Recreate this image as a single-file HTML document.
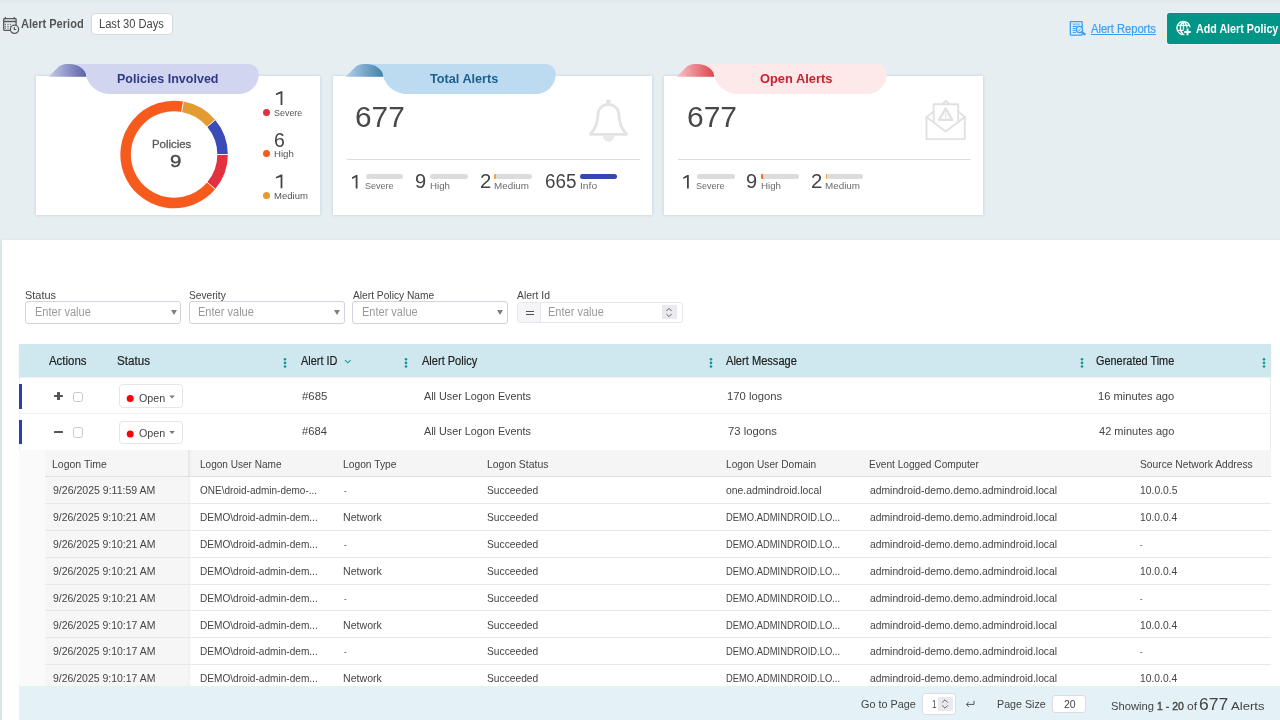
<!DOCTYPE html>
<html>
<head>
<meta charset="utf-8">
<title>Alerts</title>
<style>
*{box-sizing:border-box;margin:0;padding:0}
html,body{width:1280px;height:720px;overflow:hidden}
body{background:#e6eef2;font-family:"Liberation Sans",sans-serif;color:#444;position:relative}
#tx{position:absolute;left:0;top:0;width:1280px;height:720px;will-change:transform}
.a{position:absolute}
.t{position:absolute;white-space:nowrap;line-height:1;transform-origin:0 0}
.card{position:absolute;top:76px;height:139px;background:#fff;box-shadow:0 0 3px rgba(110,135,150,.3)}
.hr{position:absolute;height:1px;background:#dcdcdc}
.bar{position:absolute;top:173.6px;height:5px;border-radius:2.5px;background:#dcdcdc}
.bar i{position:absolute;left:0;top:0;height:5px;width:1.5px;border-radius:1px 0 0 1px}
.dot{position:absolute;width:7px;height:7px;border-radius:50%}
.finp{position:absolute;top:301px;height:22.5px;background:#fff;border:1px solid #d3d3df;border-radius:3px}
.car{position:absolute;top:7.8px;width:0;height:0;border-left:3px solid transparent;border-right:3px solid transparent;border-top:5px solid #808080}
.dots{position:absolute;width:3px;height:10px;top:358px}
.dots i{position:absolute;left:0;width:2.6px;height:2.6px;border-radius:50%;background:#0a9d8b}
.row{position:absolute;left:19px;width:1252px;background:#fff;border-left:1px solid #eee;border-right:1px solid #ebebeb}
.lbar{position:absolute;left:18.7px;width:3.3px;height:24.5px;background:#2d3eae}
.chk{position:absolute;left:73px;width:10.3px;height:10.3px;border:1px solid #c9c9c9;border-radius:2.5px;background:#fff}
.badge{position:absolute;left:119px;width:64px;height:23.2px;border:1px solid #e6e6e6;border-radius:3.5px;background:#fff}
.badge b{display:none}
.badge em{display:none;position:absolute;left:49.3px;top:10.2px;width:0;height:0;border-left:2.9px solid transparent;border-right:2.9px solid transparent;border-top:3.1px solid #7a7a7a}
.nr{position:absolute;left:0;width:1227px;height:1px;background:#e8e8e8}
.fbox{position:absolute;background:#fff;border:1px solid #d9dde1;border-radius:3px}

</style>
</head>
<body>
<div class="a" style="left:0;top:0;width:1280px;height:4px;background:linear-gradient(#dde5e9,#e6eef2)"></div>
<svg class="a" style="left:0;top:14px" width="22" height="22" viewBox="0 0 22 22" fill="none" stroke="#585858" stroke-width="1.3">
<rect x="3.7" y="4.7" width="12.4" height="11.6" rx=".7"/>
<path d="M3.7 7.5H16.1M5.4 3.1V5.3M14.2 3.1V5.3"/>
<path d="M4.8 10.4h1.2M7.4 10.4h1.2M9.9 10.4h1.2M4.8 12.3h1.2M7.4 12.3h1.2M9.9 12.3h.8M4.8 14.2h1.2M7.4 14.2h1.2" stroke-width="1.2" stroke="#777"/>
<circle cx="14.5" cy="15.3" r="4.1" fill="#e6eef2"/>
<path d="M14.3 13V15.5H16.2" stroke-width="1.2"/>
</svg>
<div class="a" style="left:91.3px;top:12.5px;width:81.4px;height:22.2px;background:#fff;border:1px solid #d6dadd;border-radius:4px"></div>
<svg class="a" style="left:1062px;top:12px" width="36" height="30" viewBox="0 0 36 30" fill="none" stroke="#3a9df2" stroke-width="1.3">
<rect x="8.35" y="9.65" width="11.8" height="13.45" rx=".5"/>
<rect x="10.6" y="11.3" width="7.2" height="2" fill="#8cc6f8" stroke="none"/>
<path d="M10.6 14.5h4M10.6 16.5h3.2M10.6 18.4h3.2M10.6 20.4h3.4" stroke-width="1"/>
<circle cx="17.5" cy="17.5" r="3.1" fill="#e6eef2" stroke-width="1.2"/>
<path d="M16.3 17.6l.9.9l1.5-1.9" stroke-width="1"/>
<path d="M19.8 19.9L23.3 22.9" stroke-width="2.1"/>
</svg>
<div class="a" style="left:1166.8px;top:13px;width:120px;height:30.6px;background:#009586;border-radius:2.5px;box-shadow:0 0 1.5px rgba(255,255,255,.9)"></div>
<svg class="a" style="left:1166px;top:10px" width="36" height="36" viewBox="0 0 36 36" fill="none" stroke="#fff" stroke-width="1.35">
<path d="M24.05 17.4A6.6 6.6 0 1 0 18.4 24.5"/>
<path d="M17.5 11.4C13.4 14.6 13.4 21.4 17.3 24.6M17.5 11.4C20 13.2 20.9 15.6 20.8 17.6M17.5 11.4V19.6M11.6 15.3H23.4M11.6 20.4H17.6"/>
<path d="M21.5 18.6V25.2M18.2 21.9H24.8" stroke-width="2"/>
</svg>
<div class="card" style="left:36px;width:284px"></div>
<div class="card" style="left:333px;width:319px"></div>
<div class="card" style="left:664px;width:319px"></div>
<svg class="a" style="left:36px;top:64px" width="240" height="31" viewBox="0 0 240 31">
<defs><linearGradient id="g1" x1="0" y1="0" x2="1" y2="0"><stop offset="0" stop-color="#c5c9e8"/><stop offset="1" stop-color="#5a64a8"/></linearGradient></defs>
<path d="M33 0H212.8A10 10 0 0 1 222.8 10A20 20 0 0 1 202.8 30H74A25 25 0 0 1 50.2 12.75H33Z" fill="#d1d5ef"/>
<path d="M12.6 12.75L21.6 3.7Q25.4 0 31 0H33A17.2 12.75 0 0 1 50.2 12.75Z" fill="url(#g1)"/>
</svg>
<svg class="a" style="left:333px;top:64px" width="240" height="31" viewBox="0 0 240 31">
<defs><linearGradient id="g2" x1="0" y1="0" x2="1" y2="0"><stop offset="0" stop-color="#b0d0e8"/><stop offset="1" stop-color="#4580ab"/></linearGradient></defs>
<path d="M33 0H212.8A10 10 0 0 1 222.8 10A20 20 0 0 1 202.8 30H74A25 25 0 0 1 50.2 12.75H33Z" fill="#bcdbf0"/>
<path d="M12.6 12.75L21.6 3.7Q25.4 0 31 0H33A17.2 12.75 0 0 1 50.2 12.75Z" fill="url(#g2)"/>
</svg>
<svg class="a" style="left:664px;top:64px" width="240" height="31" viewBox="0 0 240 31">
<defs><linearGradient id="g3" x1="0" y1="0" x2="1" y2="0"><stop offset="0" stop-color="#f9c3c8"/><stop offset="1" stop-color="#dc4552"/></linearGradient></defs>
<path d="M33 0H212.8A10 10 0 0 1 222.8 10A20 20 0 0 1 202.8 30H74A25 25 0 0 1 50.2 12.75H33Z" fill="#fde8ea"/>
<path d="M12.6 12.75L21.6 3.7Q25.4 0 31 0H33A17.2 12.75 0 0 1 50.2 12.75Z" fill="url(#g3)"/>
</svg>
<svg class="a" style="left:0;top:0" width="330" height="220" viewBox="0 0 330 220" fill="none" stroke-width="10.5"><path d="M222.60 154.50A48.5 48.5 0 0 1 211.25 185.68" stroke="#e5303f"/><path d="M211.25 185.68A48.5 48.5 0 1 1 182.52 106.74" stroke="#f65a1c"/><path d="M182.52 106.74A48.5 48.5 0 0 1 211.25 123.32" stroke="#e49b31"/><path d="M211.25 123.32A48.5 48.5 0 0 1 222.60 154.50" stroke="#3b4cb8"/><g stroke="#fff" stroke-width="0.9"><path d="M217.00 154.50L228.20 154.50"/><path d="M206.96 182.08L215.54 189.27"/><path d="M181.55 112.25L183.49 101.22"/><path d="M206.96 126.92L215.54 119.73"/></g></svg>
<div class="dot" style="left:262.9px;top:108.9px;background:#e5303f"></div>
<div class="dot" style="left:262.9px;top:150.2px;background:#f65a1c"></div>
<div class="dot" style="left:262.9px;top:191.5px;background:#e49b31"></div>
<svg class="a" style="left:580px;top:92px" width="60" height="58" viewBox="0 0 60 58" fill="none" stroke="#e3e3e3" stroke-width="2.8" stroke-linejoin="round">
<path d="M22.9 43.6A5.7 6.2 0 0 0 34.3 43.6Z" fill="#e9e9e9" stroke="none"/>
<path d="M10.3 42.3C14.2 38 17.9 33 17.9 22.8A10.5 10.5 0 0 1 38.9 22.8C38.9 33 42.6 38 46.7 42.3Z" fill="#fff"/>
<circle cx="28.4" cy="9.6" r="2.3" fill="#e3e3e3" stroke="none"/>
</svg>
<svg class="a" style="left:915px;top:92px" width="60" height="58" viewBox="0 0 60 58" fill="none" stroke="#e1e1e1" stroke-width="1.9" stroke-linejoin="round" stroke-linecap="round">
<path d="M11.5 25V47.1H49.8V25"/>
<path d="M11.5 25L30.7 39.6L49.8 25"/>
<path d="M11.5 25L18.7 19.4M49.8 25L43.2 19.4M27.6 11.6L30.7 8.9L33.8 11.6"/>
<path d="M18.7 30.2V12.3H43.2V29.8"/>
<path d="M30.7 16.6L24.2 27.9H37.3Z" stroke-width="2.4"/>
<path d="M30.6 21.6V24.4M30.6 26V26.3" stroke-width="1.2"/>
</svg>
<div class="hr" style="left:346.5px;top:159px;width:293px"></div>
<div class="hr" style="left:677.5px;top:159px;width:293px"></div>
<div class="bar" style="left:365.6px;width:37.7px"></div>
<div class="bar" style="left:430.0px;width:37.7px"></div>
<div class="bar" style="left:494.2px;width:37.7px"><i style="background:#f2a33a"></i></div>
<div class="bar" style="left:580.4px;width:36.6px;background:#3646b3"></div>
<div class="bar" style="left:696.9px;width:37.7px"></div>
<div class="bar" style="left:761.3px;width:37.7px"><i style="background:#f46a2a"></i></div>
<div class="bar" style="left:825.5px;width:37.7px"><i style="background:#f2a33a"></i></div>
<svg class="a" style="left:0;top:0" width="1000" height="220" viewBox="0 0 1000 220" fill="#444"><path d="M282.4 91.2V104.9H280.60V93.50L275.9 95.20V93.50L281.00 91.2ZM282.4 174.6V188.3H280.60V176.90L275.9 178.60V176.90L281.00 174.6ZM357.5 174.9V188.4H355.70V177.20L352 178.90V177.20L356.10 174.9ZM688.8 174.9V188.4H687.00V177.20L683.3 178.90V177.20L687.40 174.9Z"/></svg>
<div class="a" style="left:0;top:241px;width:2px;height:479px;background:#dde7eb"></div>
<div class="a" style="left:2px;top:240px;width:1278px;height:480px;background:#fff;box-shadow:0 0 2px rgba(120,140,150,.18)"></div>
<div class="finp" style="left:25.3px;width:156px"><i class="car" style="left:144.3px"></i></div>
<div class="finp" style="left:188.9px;width:156px"><i class="car" style="left:143.9px"></i></div>
<div class="finp" style="left:352.2px;width:155.7px"><i class="car" style="left:144.1px"></i></div>
<div class="finp" style="left:516.9px;top:301.6px;width:166.4px;height:21.6px;border-color:#e6e6ec">
<div class="a" style="left:0;top:0;width:23px;height:19.6px;background:#f5f5f7;border-right:1px solid #e6e6ec;border-radius:2px 0 0 2px"></div>
<div class="a" style="left:8.5px;top:8px;width:7.4px;height:1.4px;background:#505050"></div>
<div class="a" style="left:8.5px;top:11.4px;width:7.4px;height:1.4px;background:#505050"></div>
<div class="a" style="left:144.2px;top:2.4px;width:14.8px;height:14.4px;background:#e9e9ef"></div>
<svg class="a" style="left:147.6px;top:4.2px" width="8" height="11" viewBox="0 0 8 11" fill="none" stroke="#555" stroke-width="0.9"><path d="M1.4 4L4 1.4L6.6 4M1.4 7L4 9.6L6.6 7"/></svg>
</div>
<div class="row" style="top:377.4px;height:35.6px"></div>
<div class="a" style="left:19px;top:412.7px;width:1252px;height:1.6px;background:#f1f1f1"></div>
<div class="row" style="top:414px;height:36px"></div>
<div class="a" style="left:18.7px;top:344.2px;width:1252.4px;height:33.2px;background:#cfe8ef;box-shadow:0 1px 1.5px rgba(0,0,0,.07)"></div>
<svg class="a" style="left:344.4px;top:359px" width="8" height="6" viewBox="0 0 8 6" fill="none" stroke="#0a9d8b" stroke-width="1.1"><path d="M1 1.2L3.8 3.8L6.6 1.2"/></svg>
<svg class="a" style="left:282.9px;top:357px" width="4" height="12" viewBox="0 0 4 12" fill="#0a9d8b"><circle cx="2" cy="2.3" r="1.3"/><circle cx="2" cy="5.9" r="1.3"/><circle cx="2" cy="9.5" r="1.3"/></svg>
<svg class="a" style="left:404.1px;top:357px" width="4" height="12" viewBox="0 0 4 12" fill="#0a9d8b"><circle cx="2" cy="2.3" r="1.3"/><circle cx="2" cy="5.9" r="1.3"/><circle cx="2" cy="9.5" r="1.3"/></svg>
<svg class="a" style="left:708.8px;top:357px" width="4" height="12" viewBox="0 0 4 12" fill="#0a9d8b"><circle cx="2" cy="2.3" r="1.3"/><circle cx="2" cy="5.9" r="1.3"/><circle cx="2" cy="9.5" r="1.3"/></svg>
<svg class="a" style="left:1079.7px;top:357px" width="4" height="12" viewBox="0 0 4 12" fill="#0a9d8b"><circle cx="2" cy="2.3" r="1.3"/><circle cx="2" cy="5.9" r="1.3"/><circle cx="2" cy="9.5" r="1.3"/></svg>
<svg class="a" style="left:1262.4px;top:357px" width="4" height="12" viewBox="0 0 4 12" fill="#0a9d8b"><circle cx="2" cy="2.3" r="1.3"/><circle cx="2" cy="5.9" r="1.3"/><circle cx="2" cy="9.5" r="1.3"/></svg>
<div class="lbar" style="top:384.2px"></div>
<div class="lbar" style="top:419.7px"></div>
<div class="a" style="left:53.7px;top:394.8px;width:9.3px;height:2.5px;background:#555;border-radius:.6px"></div>
<div class="a" style="left:53.7px;top:430.6px;width:9.3px;height:2.5px;background:#555;border-radius:.6px"></div>
<div class="a" style="left:57.1px;top:391.6px;width:2.5px;height:8.8px;background:#555;border-radius:.6px"></div>
<div class="chk" style="top:391.8px"></div>
<div class="chk" style="top:427.4px"></div>
<div class="badge" style="top:384.4px"><b></b><em></em></div>
<div class="badge" style="top:420.6px"><b></b><em></em></div>
<svg class="a" style="left:120px;top:380px" width="60" height="70" viewBox="0 0 60 70" fill="#fb0007"><circle cx="10.2" cy="18.4" r="3.5"/><circle cx="10.2" cy="53.9" r="3.5"/><path d="M49.3 15.4h5.6l-2.8 3.1zM49.3 51h5.6l-2.8 3.1z" fill="#777"/></svg>
<div class="a" style="left:19px;top:450px;width:1252px;height:236.2px;background:#fafafa"></div>
<div class="a" style="left:44.5px;top:450px;width:1226.7px;height:236.2px;background:#fff;overflow:hidden"><div class="a" style="left:0;top:0;width:1227px;height:26px;background:#f5f5f5"></div><div class="a" style="left:0;top:0;width:143.5px;height:237px;background:#f6f6f6"></div><div class="a" style="left:143.5px;top:0;width:4px;height:237px;background:linear-gradient(90deg,rgba(0,0,0,.075),rgba(0,0,0,.03) 45%,rgba(0,0,0,0))"></div><div class="nr" style="top:26px"></div><div class="nr" style="top:53px"></div><div class="nr" style="top:80px"></div><div class="nr" style="top:107px"></div><div class="nr" style="top:134px"></div><div class="nr" style="top:160px"></div><div class="nr" style="top:187px"></div><div class="nr" style="top:214px"></div><div class="a" style="left:0;top:26px;width:1227px;height:1px;background:#e0e0e0"></div></div>
<div class="a" style="left:18.7px;top:686.2px;width:1262px;height:34px;background:#e4f1f7"></div>
<div class="fbox" style="left:922.2px;top:693.2px;width:33.8px;height:21.8px"></div>
<div class="a" style="left:938px;top:696.5px;width:14.6px;height:14.6px;background:#e9e9ef"></div>
<svg class="a" style="left:941.3px;top:698px" width="8" height="12" viewBox="0 0 8 12" fill="none" stroke="#555" stroke-width="0.9"><path d="M1.2 4.6L4 1.8L6.8 4.6M1.2 7.4L4 10.2L6.8 7.4"/></svg>
<svg class="a" style="left:964.7px;top:700.2px" width="10" height="8" viewBox="0 0 10 8" fill="none" stroke="#555" stroke-width="1"><path d="M9 0.8V4.4H1.4M3.8 2L1.4 4.4L3.8 6.8"/></svg>
<div class="fbox" style="left:1052.3px;top:695.2px;width:33.6px;height:17.4px"></div>
<div id="tx">
<div class="t" style="left:21px;top:18px;font-size:12px;color:#555;transform:scaleX(0.9209);font-weight:bold">Alert Period</div>
<div class="t" style="left:99px;top:18px;font-size:12px;color:#444;transform:scaleX(0.9270)">Last 30 Days</div>
<div class="t" style="left:1091px;top:23px;font-size:12px;color:#3a9df2;transform:scaleX(0.9272);text-decoration:underline;text-underline-offset:1px;-webkit-text-stroke:.2px #3a9df2">Alert Reports</div>
<div class="t" style="left:1196px;top:23px;font-size:12px;color:#fff;transform:scaleX(0.8923);font-weight:bold">Add Alert Policy</div>
<div class="t" style="left:117px;top:72px;font-size:13.5px;color:#2e3a87;transform:scaleX(0.9266);font-weight:bold">Policies Involved</div>
<div class="t" style="left:430px;top:72px;font-size:13.5px;color:#1e5f8c;transform:scaleX(0.9391);font-weight:bold">Total Alerts</div>
<div class="t" style="left:760px;top:72px;font-size:13.5px;color:#cc1f2e;transform:scaleX(0.9515);font-weight:bold">Open Alerts</div>
<div class="t" style="left:152px;top:139px;font-size:10.5px;color:#5a5a5a;transform:scaleX(1.0849);-webkit-text-stroke:.3px #5a5a5a">Policies</div>
<div class="t" style="left:170px;top:153px;font-size:17px;color:#4a4a4a;transform:scaleX(1.2006);-webkit-text-stroke:.4px #4a4a4a">9</div>
<div class="t" style="left:274px;top:109px;font-size:9px;color:#555;transform:scaleX(0.9923)">Severe</div>
<div class="t" style="left:274px;top:131px;font-size:19.5px;color:#444;transform:scaleX(1.0000)">6</div>
<div class="t" style="left:274px;top:150px;font-size:9px;color:#555;transform:scaleX(1.0692)">High</div>
<div class="t" style="left:274px;top:192px;font-size:9px;color:#555;transform:scaleX(1.0575)">Medium</div>
<div class="t" style="left:355px;top:102px;font-size:29.7px;color:#484848;transform:scaleX(1.0050)">677</div>
<div class="t" style="left:687px;top:102px;font-size:29.7px;color:#484848;transform:scaleX(1.0093)">677</div>
<div class="t" style="left:365px;top:181px;font-size:9.5px;color:#6a6a6a;transform:scaleX(0.9497)">Severe</div>
<div class="t" style="left:415px;top:172px;font-size:19.5px;color:#444;transform:scaleX(1.0277)">9</div>
<div class="t" style="left:430px;top:181px;font-size:9.5px;color:#6a6a6a;transform:scaleX(1.0248)">High</div>
<div class="t" style="left:480px;top:172px;font-size:19.5px;color:#444;transform:scaleX(1.0410)">2</div>
<div class="t" style="left:494px;top:181px;font-size:9.5px;color:#6a6a6a;transform:scaleX(1.0359)">Medium</div>
<div class="t" style="left:545px;top:172px;font-size:19.5px;color:#444;transform:scaleX(0.9659)">665</div>
<div class="t" style="left:580px;top:181px;font-size:9.5px;color:#6a6a6a;transform:scaleX(1.0785)">Info</div>
<div class="t" style="left:696px;top:181px;font-size:9.5px;color:#6a6a6a;transform:scaleX(0.9497)">Severe</div>
<div class="t" style="left:746px;top:172px;font-size:19.5px;color:#444;transform:scaleX(1.0277)">9</div>
<div class="t" style="left:761px;top:181px;font-size:9.5px;color:#6a6a6a;transform:scaleX(1.0248)">High</div>
<div class="t" style="left:811px;top:172px;font-size:19.5px;color:#444;transform:scaleX(1.0410)">2</div>
<div class="t" style="left:825px;top:181px;font-size:9.5px;color:#6a6a6a;transform:scaleX(1.0359)">Medium</div>
<div class="t" style="left:25px;top:290px;font-size:10.5px;color:#444;transform:scaleX(1.0423)">Status</div>
<div class="t" style="left:189px;top:290px;font-size:10.5px;color:#444;transform:scaleX(0.9690)">Severity</div>
<div class="t" style="left:353px;top:290px;font-size:10.5px;color:#444;transform:scaleX(0.9734)">Alert Policy Name</div>
<div class="t" style="left:517px;top:290px;font-size:10.5px;color:#444;transform:scaleX(0.9906)">Alert Id</div>
<div class="t" style="left:35px;top:306px;font-size:12px;color:#9a9a9a;transform:scaleX(0.9190)">Enter value</div>
<div class="t" style="left:198px;top:306px;font-size:12px;color:#9a9a9a;transform:scaleX(0.9207)">Enter value</div>
<div class="t" style="left:362px;top:306px;font-size:12px;color:#9a9a9a;transform:scaleX(0.9166)">Enter value</div>
<div class="t" style="left:548px;top:306px;font-size:12px;color:#9a9a9a;transform:scaleX(0.9185)">Enter value</div>
<div class="t" style="left:49px;top:355px;font-size:12px;color:#222;transform:scaleX(0.9524);-webkit-text-stroke:.2px #222">Actions</div>
<div class="t" style="left:117px;top:355px;font-size:12px;color:#222;transform:scaleX(0.9689);-webkit-text-stroke:.2px #222">Status</div>
<div class="t" style="left:301px;top:355px;font-size:12px;color:#222;transform:scaleX(0.9081);-webkit-text-stroke:.2px #222">Alert ID</div>
<div class="t" style="left:422px;top:355px;font-size:12px;color:#222;transform:scaleX(0.9198);-webkit-text-stroke:.2px #222">Alert Policy</div>
<div class="t" style="left:726px;top:355px;font-size:12px;color:#222;transform:scaleX(0.9244);-webkit-text-stroke:.2px #222">Alert Message</div>
<div class="t" style="left:1096px;top:355px;font-size:12px;color:#222;transform:scaleX(0.9090);-webkit-text-stroke:.2px #222">Generated Time</div>
<div class="t" style="left:139px;top:393px;font-size:11.5px;color:#444;transform:scaleX(0.9318)">Open</div>
<div class="t" style="left:302px;top:391px;font-size:11.5px;color:#444;transform:scaleX(0.9902)">#685</div>
<div class="t" style="left:424px;top:391px;font-size:11.5px;color:#444;transform:scaleX(0.9397)">All User Logon Events</div>
<div class="t" style="left:727px;top:391px;font-size:11.5px;color:#444;transform:scaleX(0.9799)">170 logons</div>
<div class="t" style="left:1098px;top:391px;font-size:11.5px;color:#444;transform:scaleX(0.9698)">16 minutes ago</div>
<div class="t" style="left:139px;top:428px;font-size:11.5px;color:#444;transform:scaleX(0.9318)">Open</div>
<div class="t" style="left:302px;top:426px;font-size:11.5px;color:#444;transform:scaleX(0.9746)">#684</div>
<div class="t" style="left:424px;top:426px;font-size:11.5px;color:#444;transform:scaleX(0.9397)">All User Logon Events</div>
<div class="t" style="left:728px;top:426px;font-size:11.5px;color:#444;transform:scaleX(0.9792)">73 logons</div>
<div class="t" style="left:1099px;top:426px;font-size:11.5px;color:#444;transform:scaleX(0.9577)">42 minutes ago</div>
<div class="t" style="left:52px;top:459px;font-size:11px;color:#444;transform:scaleX(0.9550)">Logon Time</div>
<div class="t" style="left:200px;top:459px;font-size:11px;color:#444;transform:scaleX(0.9138)">Logon User Name</div>
<div class="t" style="left:343px;top:459px;font-size:11px;color:#444;transform:scaleX(0.9334)">Logon Type</div>
<div class="t" style="left:487px;top:459px;font-size:11px;color:#444;transform:scaleX(0.9473)">Logon Status</div>
<div class="t" style="left:726px;top:459px;font-size:11px;color:#444;transform:scaleX(0.9223)">Logon User Domain</div>
<div class="t" style="left:869px;top:459px;font-size:11px;color:#444;transform:scaleX(0.9206)">Event Logged Computer</div>
<div class="t" style="left:1140px;top:459px;font-size:11px;color:#444;transform:scaleX(0.9311)">Source Network Address</div>
<div class="t" style="left:53px;top:485px;font-size:11px;color:#444;transform:scaleX(0.9582)">9/26/2025 9:11:59 AM</div>
<div class="t" style="left:200px;top:485px;font-size:11px;color:#444;transform:scaleX(0.9076)">ONE\droid-admin-demo-...</div>
<div class="t" style="left:344px;top:485px;font-size:11px;color:#666;transform:scaleX(0.7114)">-</div>
<div class="t" style="left:487px;top:485px;font-size:11px;color:#444;transform:scaleX(0.9303)">Succeeded</div>
<div class="t" style="left:726px;top:485px;font-size:11px;color:#444;transform:scaleX(0.9405)">one.admindroid.local</div>
<div class="t" style="left:870px;top:485px;font-size:11px;color:#444;transform:scaleX(0.9385)">admindroid-demo.demo.admindroid.local</div>
<div class="t" style="left:1140px;top:485px;font-size:11px;color:#444;transform:scaleX(0.9412)">10.0.0.5</div>
<div class="t" style="left:53px;top:512px;font-size:11px;color:#444;transform:scaleX(0.9516)">9/26/2025 9:10:21 AM</div>
<div class="t" style="left:200px;top:512px;font-size:11px;color:#444;transform:scaleX(0.9168)">DEMO\droid-admin-dem...</div>
<div class="t" style="left:343px;top:512px;font-size:11px;color:#444;transform:scaleX(0.9629)">Network</div>
<div class="t" style="left:487px;top:512px;font-size:11px;color:#444;transform:scaleX(0.9303)">Succeeded</div>
<div class="t" style="left:726px;top:512px;font-size:11px;color:#444;transform:scaleX(0.8520)">DEMO.ADMINDROID.LO...</div>
<div class="t" style="left:870px;top:512px;font-size:11px;color:#444;transform:scaleX(0.9385)">admindroid-demo.demo.admindroid.local</div>
<div class="t" style="left:1140px;top:512px;font-size:11px;color:#444;transform:scaleX(0.9359)">10.0.0.4</div>
<div class="t" style="left:53px;top:539px;font-size:11px;color:#444;transform:scaleX(0.9516)">9/26/2025 9:10:21 AM</div>
<div class="t" style="left:200px;top:539px;font-size:11px;color:#444;transform:scaleX(0.9168)">DEMO\droid-admin-dem...</div>
<div class="t" style="left:344px;top:539px;font-size:11px;color:#666;transform:scaleX(0.7114)">-</div>
<div class="t" style="left:487px;top:539px;font-size:11px;color:#444;transform:scaleX(0.9303)">Succeeded</div>
<div class="t" style="left:726px;top:539px;font-size:11px;color:#444;transform:scaleX(0.8520)">DEMO.ADMINDROID.LO...</div>
<div class="t" style="left:870px;top:539px;font-size:11px;color:#444;transform:scaleX(0.9385)">admindroid-demo.demo.admindroid.local</div>
<div class="t" style="left:1140px;top:539px;font-size:11px;color:#666;transform:scaleX(0.7114)">-</div>
<div class="t" style="left:53px;top:566px;font-size:11px;color:#444;transform:scaleX(0.9516)">9/26/2025 9:10:21 AM</div>
<div class="t" style="left:200px;top:566px;font-size:11px;color:#444;transform:scaleX(0.9168)">DEMO\droid-admin-dem...</div>
<div class="t" style="left:343px;top:566px;font-size:11px;color:#444;transform:scaleX(0.9629)">Network</div>
<div class="t" style="left:487px;top:566px;font-size:11px;color:#444;transform:scaleX(0.9303)">Succeeded</div>
<div class="t" style="left:726px;top:566px;font-size:11px;color:#444;transform:scaleX(0.8520)">DEMO.ADMINDROID.LO...</div>
<div class="t" style="left:870px;top:566px;font-size:11px;color:#444;transform:scaleX(0.9385)">admindroid-demo.demo.admindroid.local</div>
<div class="t" style="left:1140px;top:566px;font-size:11px;color:#444;transform:scaleX(0.9359)">10.0.0.4</div>
<div class="t" style="left:53px;top:593px;font-size:11px;color:#444;transform:scaleX(0.9516)">9/26/2025 9:10:21 AM</div>
<div class="t" style="left:200px;top:593px;font-size:11px;color:#444;transform:scaleX(0.9168)">DEMO\droid-admin-dem...</div>
<div class="t" style="left:344px;top:593px;font-size:11px;color:#666;transform:scaleX(0.7114)">-</div>
<div class="t" style="left:487px;top:593px;font-size:11px;color:#444;transform:scaleX(0.9303)">Succeeded</div>
<div class="t" style="left:726px;top:593px;font-size:11px;color:#444;transform:scaleX(0.8520)">DEMO.ADMINDROID.LO...</div>
<div class="t" style="left:870px;top:593px;font-size:11px;color:#444;transform:scaleX(0.9385)">admindroid-demo.demo.admindroid.local</div>
<div class="t" style="left:1140px;top:593px;font-size:11px;color:#666;transform:scaleX(0.7114)">-</div>
<div class="t" style="left:53px;top:620px;font-size:11px;color:#444;transform:scaleX(0.9516)">9/26/2025 9:10:17 AM</div>
<div class="t" style="left:200px;top:620px;font-size:11px;color:#444;transform:scaleX(0.9168)">DEMO\droid-admin-dem...</div>
<div class="t" style="left:343px;top:620px;font-size:11px;color:#444;transform:scaleX(0.9629)">Network</div>
<div class="t" style="left:487px;top:620px;font-size:11px;color:#444;transform:scaleX(0.9303)">Succeeded</div>
<div class="t" style="left:726px;top:620px;font-size:11px;color:#444;transform:scaleX(0.8520)">DEMO.ADMINDROID.LO...</div>
<div class="t" style="left:870px;top:620px;font-size:11px;color:#444;transform:scaleX(0.9385)">admindroid-demo.demo.admindroid.local</div>
<div class="t" style="left:1140px;top:620px;font-size:11px;color:#444;transform:scaleX(0.9359)">10.0.0.4</div>
<div class="t" style="left:53px;top:646px;font-size:11px;color:#444;transform:scaleX(0.9516)">9/26/2025 9:10:17 AM</div>
<div class="t" style="left:200px;top:646px;font-size:11px;color:#444;transform:scaleX(0.9168)">DEMO\droid-admin-dem...</div>
<div class="t" style="left:344px;top:646px;font-size:11px;color:#666;transform:scaleX(0.7114)">-</div>
<div class="t" style="left:487px;top:646px;font-size:11px;color:#444;transform:scaleX(0.9303)">Succeeded</div>
<div class="t" style="left:726px;top:646px;font-size:11px;color:#444;transform:scaleX(0.8520)">DEMO.ADMINDROID.LO...</div>
<div class="t" style="left:870px;top:646px;font-size:11px;color:#444;transform:scaleX(0.9385)">admindroid-demo.demo.admindroid.local</div>
<div class="t" style="left:1140px;top:646px;font-size:11px;color:#666;transform:scaleX(0.7114)">-</div>
<div class="t" style="left:53px;top:673px;font-size:11px;color:#444;transform:scaleX(0.9516)">9/26/2025 9:10:17 AM</div>
<div class="t" style="left:200px;top:673px;font-size:11px;color:#444;transform:scaleX(0.9168)">DEMO\droid-admin-dem...</div>
<div class="t" style="left:343px;top:673px;font-size:11px;color:#444;transform:scaleX(0.9629)">Network</div>
<div class="t" style="left:487px;top:673px;font-size:11px;color:#444;transform:scaleX(0.9303)">Succeeded</div>
<div class="t" style="left:726px;top:673px;font-size:11px;color:#444;transform:scaleX(0.8520)">DEMO.ADMINDROID.LO...</div>
<div class="t" style="left:870px;top:673px;font-size:11px;color:#444;transform:scaleX(0.9385)">admindroid-demo.demo.admindroid.local</div>
<div class="t" style="left:1140px;top:673px;font-size:11px;color:#444;transform:scaleX(0.9359)">10.0.0.4</div>
<div class="t" style="left:861px;top:699px;font-size:11px;color:#444;transform:scaleX(0.9833)">Go to Page</div>
<div class="t" style="left:932px;top:699px;font-size:11px;color:#444;transform:scaleX(0.7338)">1</div>
<div class="t" style="left:997px;top:699px;font-size:11px;color:#444;transform:scaleX(0.9733)">Page Size</div>
<div class="t" style="left:1064px;top:699px;font-size:10.5px;color:#444;transform:scaleX(1.0009)">20</div>
<div class="t" style="left:1111px;top:701px;font-size:11.5px;color:#444;transform:scaleX(0.9735)">Showing</div>
<div class="t" style="left:1157px;top:701px;font-size:11.5px;color:#444;transform:scaleX(0.9146);-webkit-text-stroke:.4px #444">1 - 20</div>
<div class="t" style="left:1187px;top:701px;font-size:11.5px;color:#444;transform:scaleX(1.0402)">of</div>
<div class="t" style="left:1199px;top:697px;font-size:16px;color:#444;transform:scaleX(1.0905)">677</div>
<div class="t" style="left:1231px;top:701px;font-size:11.5px;color:#444;transform:scaleX(1.1378)">Alerts</div>
</div>
</body>
</html>
